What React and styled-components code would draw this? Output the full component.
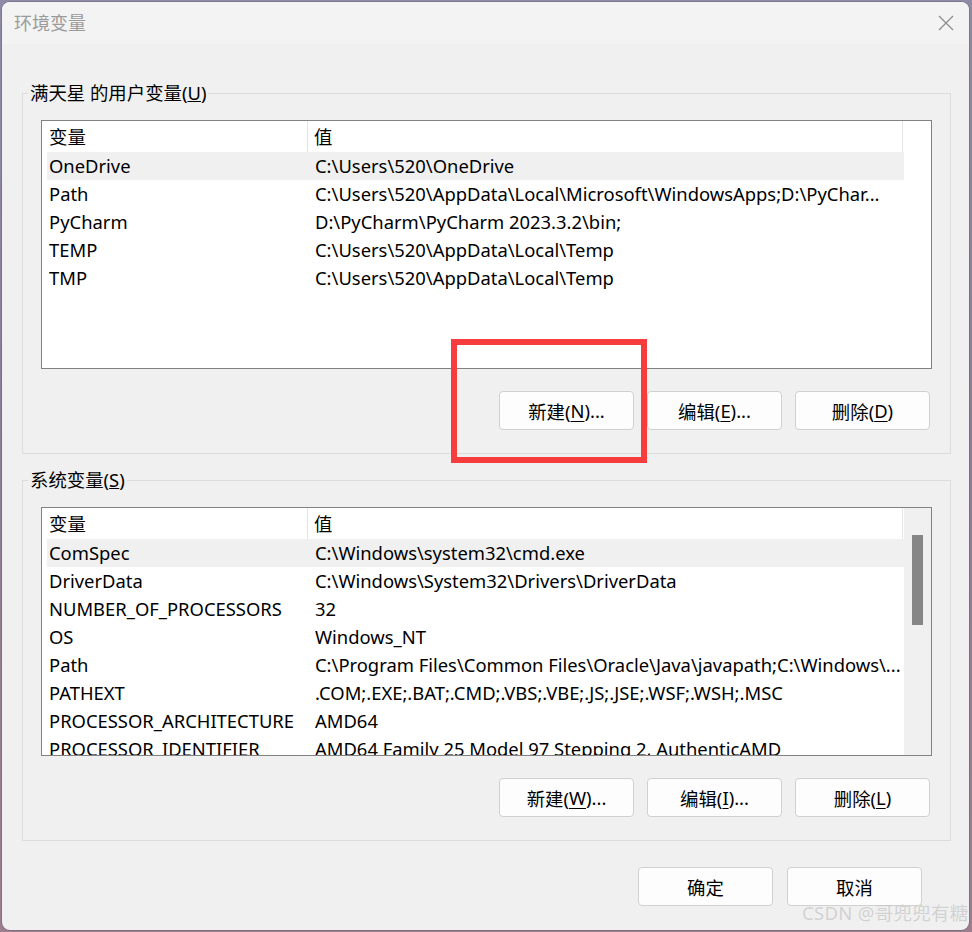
import React from "react";
import styled, { createGlobalStyle } from "styled-components";

const GlobalStyle = createGlobalStyle`
  html, body { margin: 0; padding: 0; }
  body {
    width: 972px;
    height: 932px;
    overflow: hidden;
    background: linear-gradient(180deg, #8f8aa6 0%, #8d7e98 45%, #9c7f8e 100%);
    font-family: "Noto Sans", "Noto Sans CJK SC", sans-serif;
  }
  #root { width: 972px; height: 932px; }
`;

const FONT = `"Noto Sans", "Noto Sans CJK SC", sans-serif`;

const Window = styled.div`
  position: relative;
  margin: 2px 0 0 2px;
  width: 967px;
  height: 928px;
  border-radius: 8px;
  overflow: hidden;
  background: #f0f0f0;
  display: flex;
  flex-direction: column;
  box-shadow: 0 0 0 1px rgba(90, 80, 100, 0.35);
`;

const TitleBar = styled.div`
  height: 42px;
  flex: 0 0 42px;
  background: #f3f3f3;
  display: flex;
  align-items: center;
  justify-content: space-between;
  padding: 0 15px 0 12px;
`;

const Title = styled.div`
  font-family: ${FONT};
  font-size: 18px;
  color: #9a9a9a;
  line-height: 24px;
`;

const CloseBtn = styled.div`
  width: 16px;
  height: 16px;
  display: flex;
  align-items: center;
  justify-content: center;
`;

const Body = styled.div`
  flex: 1;
  display: flex;
  flex-direction: column;
  padding: 37px 18px 0 20px;
`;

const Group = styled.fieldset`
  margin: 0 0 ${(p) => p.$mb || 0}px 0;
  padding: 15px 17px 23px 18px;
  border: 1px solid #dcdcdc;
  min-width: 0;
`;

const Legend = styled.legend`
  font-family: ${FONT};
  font-size: 18.4px;
  line-height: 24px;
  color: #000;
  padding: 0 2px;
  margin-left: -13px;
`;

const ListBox = styled.div`
  width: 889px;
  height: 247px;
  border: 1px solid #828282;
  background: #fff;
  display: flex;
  overflow: hidden;
`;

const ListContent = styled.div`
  width: 862px;
  flex: 0 0 862px;
  display: flex;
  flex-direction: column;
`;

const HeaderRow = styled.div`
  display: grid;
  grid-template-columns: 266px 595px;
  height: 31px;
  flex: 0 0 31px;
`;

const HeaderCell = styled.div`
  font-family: ${FONT};
  font-size: 18.4px;
  line-height: 31px;
  padding-left: ${(p) => p.$pl}px;
  border-right: 1px solid #e5e5e5;
  color: #000;
`;

const Row = styled.div`
  display: grid;
  grid-template-columns: 261px 596px;
  height: 28px;
  flex: 0 0 28px;
  margin-left: 5px;
  width: 857px;
  background: ${(p) => (p.$selected ? "#f0f0f0" : "transparent")};
`;

const Cell = styled.div`
  font-family: ${FONT};
  font-size: 18.4px;
  line-height: 28px;
  padding-left: ${(p) => p.$pl}px;
  white-space: nowrap;
  overflow: hidden;
  color: #000;
`;

const ScrollTrack = styled.div`
  flex: 1;
  background: ${(p) => (p.$show ? "#f0f0f0" : "#fff")};
  position: relative;
`;

const ScrollThumb = styled.div`
  position: absolute;
  left: 8px;
  top: 27px;
  width: 11px;
  height: 90px;
  background: #868686;
`;

const ButtonRow = styled.div`
  display: flex;
  justify-content: flex-end;
  gap: 13px;
  margin-top: 22px;
  padding-right: ${(p) => p.$pr || 0}px;
`;

const Button = styled.div`
  width: 135px;
  height: 39px;
  box-sizing: border-box;
  border: 1px solid #d0d0d0;
  border-radius: 4px;
  background: #fdfdfd;
  display: flex;
  align-items: center;
  justify-content: center;
  font-family: ${FONT};
  font-size: 18.4px;
  color: #000;
  u { text-underline-offset: 3px; text-decoration-thickness: 1px; }
`;

const FooterRow = styled.div`
  display: flex;
  justify-content: flex-end;
  gap: 14px;
  margin-top: 26px;
  padding-right: 29px;
`;

const Highlight = styled.div`
  position: absolute;
  left: 449px;
  top: 337px;
  width: 196px;
  height: 124px;
  box-sizing: border-box;
  border: 6px solid #f63c3c;
  pointer-events: none;
`;

const Watermark = styled.div`
  position: absolute;
  left: 802px;
  top: 900px;
  font-family: ${FONT};
  font-size: 18.5px;
  line-height: 26px;
  color: rgba(170, 170, 170, 0.5);
  text-shadow: 0 0 1px rgba(255, 255, 255, 0.6);
  white-space: nowrap;
  letter-spacing: 0.3px;
  pointer-events: none;
`;

const userVars = [
  ["OneDrive", "C:\\Users\\520\\OneDrive"],
  ["Path", "C:\\Users\\520\\AppData\\Local\\Microsoft\\WindowsApps;D:\\PyChar..."],
  ["PyCharm", "D:\\PyCharm\\PyCharm 2023.3.2\\bin;"],
  ["TEMP", "C:\\Users\\520\\AppData\\Local\\Temp"],
  ["TMP", "C:\\Users\\520\\AppData\\Local\\Temp"],
];

const sysVars = [
  ["ComSpec", "C:\\Windows\\system32\\cmd.exe"],
  ["DriverData", "C:\\Windows\\System32\\Drivers\\DriverData"],
  ["NUMBER_OF_PROCESSORS", "32"],
  ["OS", "Windows_NT"],
  ["Path", "C:\\Program Files\\Common Files\\Oracle\\Java\\javapath;C:\\Windows\\..."],
  ["PATHEXT", ".COM;.EXE;.BAT;.CMD;.VBS;.VBE;.JS;.JSE;.WSF;.WSH;.MSC"],
  ["PROCESSOR_ARCHITECTURE", "AMD64"],
  ["PROCESSOR_IDENTIFIER", "AMD64 Family 25 Model 97 Stepping 2, AuthenticAMD"],
];

function VarList({ rows, scroll }) {
  return (
    <ListBox>
      <ListContent>
        <HeaderRow>
          <HeaderCell $pl={7}>变量</HeaderCell>
          <HeaderCell $pl={6}>值</HeaderCell>
        </HeaderRow>
        {rows.map(([k, v], i) => (
          <Row key={k + i} $selected={i === 0}>
            <Cell $pl={2}>{k}</Cell>
            <Cell $pl={7}>{v}</Cell>
          </Row>
        ))}
      </ListContent>
      <ScrollTrack $show={scroll}>{scroll && <ScrollThumb />}</ScrollTrack>
    </ListBox>
  );
}

export default function App() {
  return (
    <>
      <GlobalStyle />
      <Window>
        <TitleBar>
          <Title>环境变量</Title>
          <CloseBtn>
            <svg width="16" height="16" viewBox="0 0 16 16">
              <path d="M1 1 L15 15 M15 1 L1 15" stroke="#8a8a8a" strokeWidth="1.2" fill="none" />
            </svg>
          </CloseBtn>
        </TitleBar>
        <Body>
          <Group $mb={14}>
            <Legend>满天星 的用户变量(<u>U</u>)</Legend>
            <VarList rows={userVars} scroll={false} />
            <ButtonRow $pr={3}>
              <Button>新建(<u>N</u>)...</Button>
              <Button>编辑(<u>E</u>)...</Button>
              <Button>删除(<u>D</u>)</Button>
            </ButtonRow>
          </Group>
          <Group>
            <Legend>系统变量(<u>S</u>)</Legend>
            <VarList rows={sysVars} scroll />
            <ButtonRow $pr={3}>
              <Button>新建(<u>W</u>)...</Button>
              <Button>编辑(<u>I</u>)...</Button>
              <Button>删除(<u>L</u>)</Button>
            </ButtonRow>
          </Group>
          <FooterRow>
            <Button>确定</Button>
            <Button>取消</Button>
          </FooterRow>
        </Body>
        <Highlight />
      </Window>
      <Watermark>CSDN @哥兜兜有糖</Watermark>
    </>
  );
}
